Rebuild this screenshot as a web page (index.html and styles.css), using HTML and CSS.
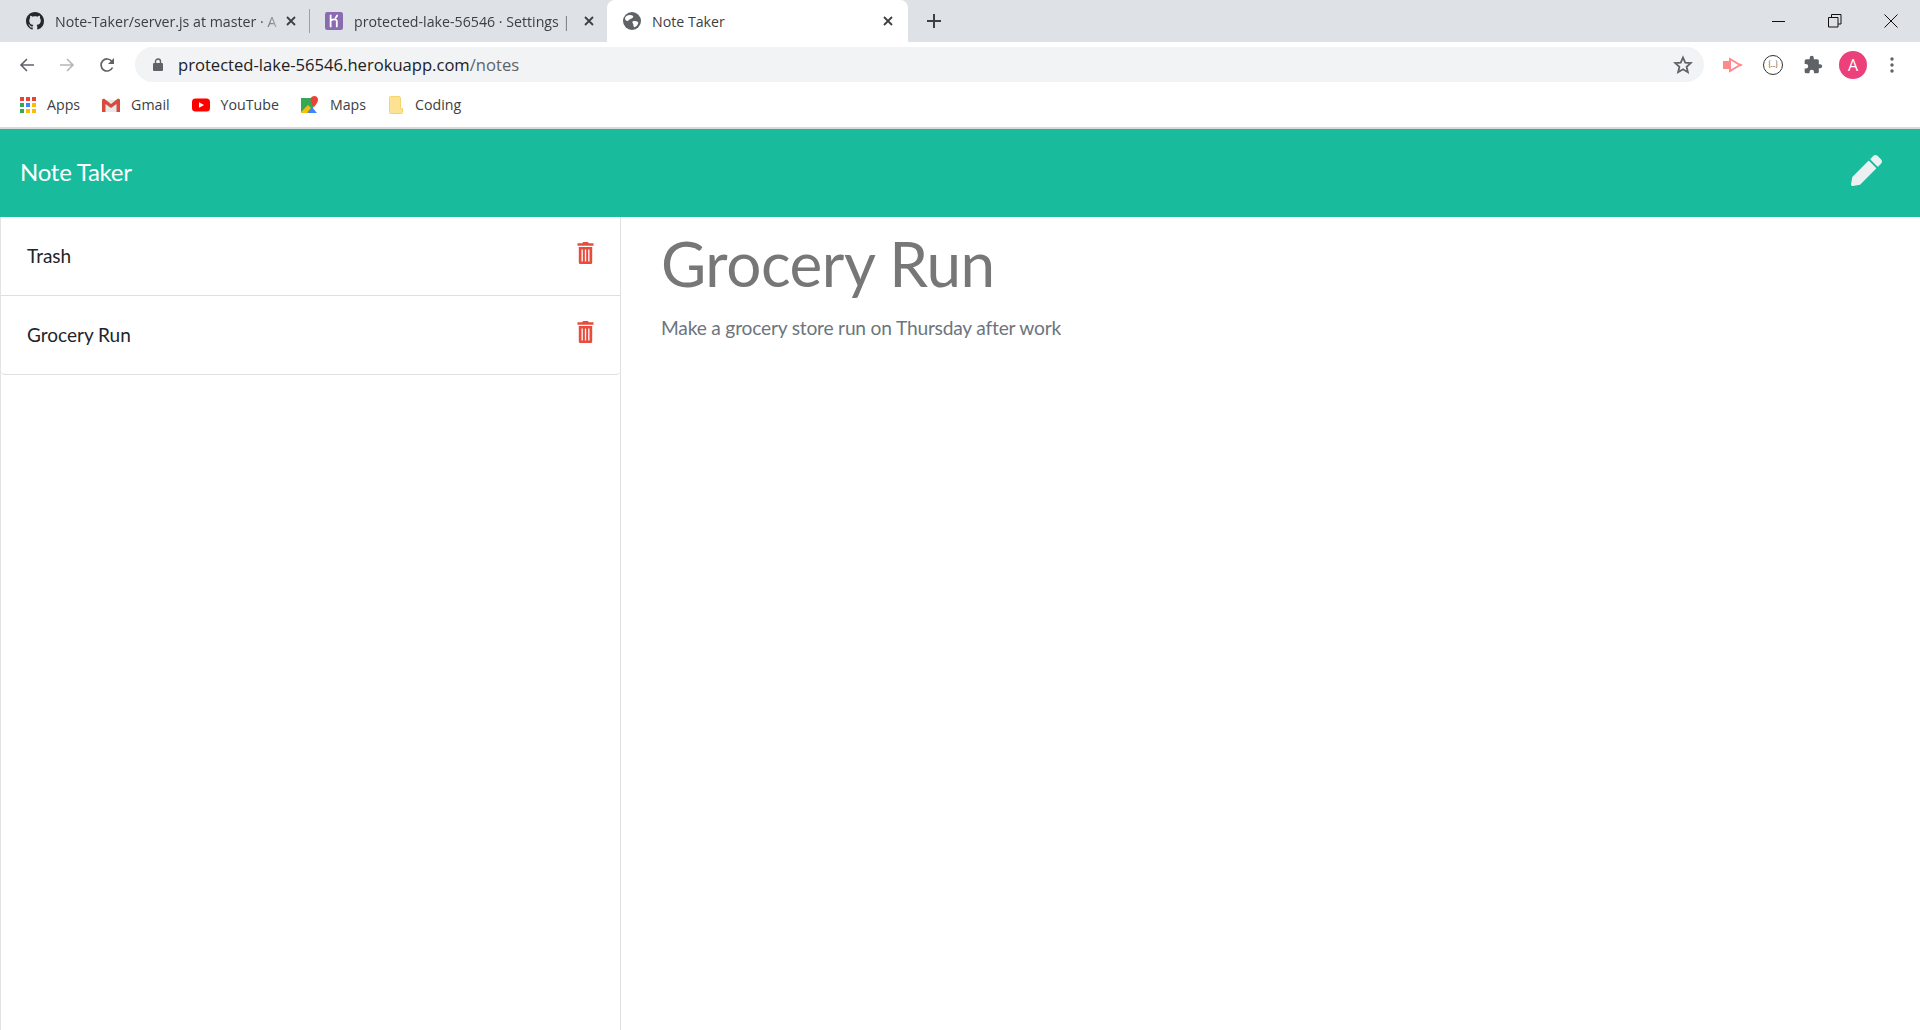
FILE: index.html
```html
<!DOCTYPE html>
<html lang="en">
<head>
    <meta charset="UTF-8">
    <meta name="viewport" content="width=device-width, initial-scale=1.0">
    <title>Note Taker</title>
    <link rel="stylesheet" href="styles.css">
</head>
<body>
    <div class="tab-strip">
        <div class="tab tab-one">
            <svg class="favicon" viewBox="0 0 16 16"><path fill="#24292e" d="M8 0C3.58 0 0 3.58 0 8c0 3.54 2.29 6.53 5.47 7.59.4.07.55-.17.55-.38 0-.19-.01-.82-.01-1.49-2.01.37-2.53-.49-2.69-.94-.09-.23-.48-.94-.82-1.13-.28-.15-.68-.52-.01-.53.63-.01 1.08.58 1.23.82.72 1.21 1.87.87 2.33.66.07-.52.28-.87.51-1.07-1.78-.2-3.64-.89-3.64-3.95 0-.87.31-1.59.82-2.15-.08-.2-.36-1.02.08-2.12 0 0 .67-.21 2.2.82.64-.18 1.32-.27 2-.27s1.36.09 2 .27c1.53-1.04 2.2-.82 2.2-.82.44 1.1.16 1.92.08 2.12.51.56.82 1.27.82 2.15 0 3.07-1.87 3.75-3.65 3.95.29.25.54.73.54 1.48 0 1.07-.01 1.93-.01 2.2 0 .21.15.46.55.38A8.01 8.01 0 0 0 16 8c0-4.42-3.58-8-8-8z"/></svg>
            <span class="tab-title tab-fade">Note-Taker/server.js at master · A</span>
            <svg class="tab-close" viewBox="0 0 10 10"><path d="M1 1l8 8M9 1l-8 8"/></svg>
        </div>
        <div class="tab-sep"></div>
        <div class="tab tab-two">
            <svg class="favicon" viewBox="0 0 16 16"><rect width="16" height="16" rx="2" fill="#8a6bb1"/><path fill="none" stroke="#fff" stroke-width="1.6" d="M5 2.5v11M5 7.5c2-1.2 5.5-1.8 5.5.8v5.2M11 2.5c0 1.2-.8 2-2 3"/></svg>
            <span class="tab-title tab-fade">protected-lake-56546 · Settings |</span>
            <svg class="tab-close" viewBox="0 0 10 10"><path d="M1 1l8 8M9 1l-8 8"/></svg>
        </div>
        <div class="tab tab-active">
            <svg class="favicon" viewBox="0 0 16 16"><circle cx="8" cy="8" r="8" fill="#5f6368"/><path fill="#fff" d="M3 3.5c2-1 4.500-1 6 0 .6 1-.8 2.400-2.500 2.700C5.200 6.500 5 8 3.800 8 2.800 8 1.800 7 1.800 6c0-1 .4-1.800 1.200-2.500zM8.500 8.500c1.500-.7 3.500-.5 5 .5.300 1.500-1.500 4-3.500 4.500-1-.5-.5-2-1-3-.4-.8-1-1.300-.5-2z"/></svg>
            <span class="tab-title">Note Taker</span>
            <svg class="tab-close" viewBox="0 0 10 10"><path d="M1 1l8 8M9 1l-8 8"/></svg>
        </div>
        <svg class="new-tab" viewBox="0 0 14 14"><path d="M7 0v14M0 7h14"/></svg>
        <div class="window-btns">
            <svg viewBox="0 0 14 14"><path d="M0 7.500h13"/></svg>
            <svg viewBox="0 0 14 14"><path d="M.5 3.500h9.500v9.500H.5zM3.500 3.500V.5h9.500v9.500h-3"/></svg>
            <svg viewBox="0 0 14 14"><path d="M.5.5l13 13M13.500.5l-13 13"/></svg>
        </div>
    </div>

    <div class="toolbar">
        <svg class="nav-icon" viewBox="0 0 16 16"><path fill="none" stroke="#5f6368" stroke-width="1.600" d="M15 8H2M8 2L2 8l6 6"/></svg>
        <svg class="nav-icon" viewBox="0 0 16 16"><path fill="none" stroke="#b4b6b9" stroke-width="1.600" d="M1 8h13M8 2l6 6-6 6"/></svg>
        <svg class="nav-icon" viewBox="0 0 16 16"><path fill="none" stroke="#5f6368" stroke-width="1.700" d="M13.500 10.500A6 6 0 1 1 12.800 4.300"/><path fill="#5f6368" d="M15 1v6H9z"/></svg>
        <div class="omnibox">
            <svg class="lock" viewBox="0 0 10 13"><path fill="#5f6368" d="M1 5h8a1 1 0 0 1 1 1v6a1 1 0 0 1-1 1H1a1 1 0 0 1-1-1V6a1 1 0 0 1 1-1z"/><path fill="none" stroke="#5f6368" stroke-width="1.400" d="M2.500 5.500V3.500a2.500 2.500 0 0 1 5 0v2"/></svg>
            <span class="url">protected-lake-56546.herokuapp.com<span class="url-path">/notes</span></span>
            <svg class="star" viewBox="0 0 24 24"><path fill="none" stroke="#5f6368" stroke-width="2.200" d="M12 3l2.700 6.100 6.600.6-5 4.400 1.500 6.500L12 17.200l-5.800 3.400 1.500-6.500-5-4.400 6.600-.6z"/></svg>
        </div>
        <div class="ext-icons">
            <svg class="ext" viewBox="0 0 20 20"><path fill="#ff8a8e" d="M0 6h6v8H0z"/><path fill="none" stroke="#ff8a8e" stroke-width="2" d="M7 4l10 6-10 6z"/><path fill="#ff8a8e" d="M17 8.500l3 1.500-3 1.500z"/><path fill="#fff" d="M5 5h1v1H5zM5 14h1v1H5z"/></svg>
            <div class="ext-ring">{...}</div>
            <svg class="ext" viewBox="0 0 24 24"><path fill="#5f6368" d="M20.500 11H19V7a2 2 0 0 0-2-2h-4V3.500a2.500 2.500 0 0 0-5 0V5H4a2 2 0 0 0-2 2v3.800h1.500a2.700 2.700 0 0 1 0 5.400H2V20a2 2 0 0 0 2 2h3.800v-1.500a2.700 2.700 0 0 1 5.400 0V22H17a2 2 0 0 0 2-2v-4h1.500a2.500 2.500 0 0 0 0-5z"/></svg>
            <div class="avatar">A</div>
            <svg class="kebab" viewBox="0 0 4 16"><circle cx="2" cy="2" r="1.700"/><circle cx="2" cy="8" r="1.700"/><circle cx="2" cy="14" r="1.700"/></svg>
        </div>
    </div>

    <div class="bookmarks">
        <div class="bookmark">
            <svg class="bm-icon" viewBox="0 0 16 16">
                <rect x="0" y="0" width="4" height="4" fill="#ea4335"/><rect x="6" y="0" width="4" height="4" fill="#ea4335"/><rect x="12" y="0" width="4" height="4" fill="#ea4335"/>
                <rect x="0" y="6" width="4" height="4" fill="#34a853"/><rect x="6" y="6" width="4" height="4" fill="#4285f4"/><rect x="12" y="6" width="4" height="4" fill="#fbbc05"/>
                <rect x="0" y="12" width="4" height="4" fill="#34a853"/><rect x="6" y="12" width="4" height="4" fill="#fbbc05"/><rect x="12" y="12" width="4" height="4" fill="#fbbc05"/>
            </svg>
            <span>Apps</span>
        </div>
        <div class="bookmark">
            <svg class="bm-icon bm-wide" viewBox="0 0 18 14"><path fill="#e8e8e8" d="M3 2h12v12H3z"/><path fill="#d54c3f" d="M0 1.500V14h3.500V6L9 10l5.500-4v8H18V1.500L16 .5 9 6 2 .5z"/></svg>
            <span>Gmail</span>
        </div>
        <div class="bookmark">
            <svg class="bm-icon bm-wide" viewBox="0 0 18 13"><rect width="18" height="13" rx="3.500" fill="#f00"/><path fill="#fff" d="M7 3.800L12 6.500 7 9.200z"/></svg>
            <span>YouTube</span>
        </div>
        <div class="bookmark">
            <svg class="bm-icon bm-wide" viewBox="0 0 18 18"><path fill="#34a853" d="M0 2h12v14L0 16z"/><path fill="#fbbc05" d="M0 16l7-7 3 3-4 5H0z"/><path fill="#4285f4" d="M6 17l5-6 5 6z"/><path fill="#ea4335" d="M13 0a4 4 0 0 1 4 4c0 3-4 6-4 8-.5-2-3.500-5-3.500-8A4 4 0 0 1 13 0z"/></svg>
            <span>Maps</span>
        </div>
        <div class="bookmark">
            <svg class="bm-folder" viewBox="0 0 14 18"><path fill="#fde293" stroke="#f5d46e" d="M.5 1.500a1 1 0 0 1 1-1h9l1 1v11h2v4a1 1 0 0 1-1 1h-11a1 1 0 0 1-1-1z"/></svg>
            <span>Coding</span>
        </div>
    </div>

    <nav class="navbar">
        <a class="navbar-brand">Note Taker</a>
        <svg class="pencil" viewBox="0 0 512 512"><path fill="#ecf0f1" d="M497.900 142.100l-46.100 46.100c-4.700 4.700-12.300 4.700-17 0l-111-111c-4.700-4.700-4.700-12.300 0-17l46.100-46.100c18.700-18.700 49.100-18.700 67.900 0l60.100 60.100c18.800 18.700 18.800 49.100 0 67.900zM284.200 99.800L21.600 362.400.4 483.900c-2.900 16.400 11.400 30.600 27.800 27.800l121.500-21.300 262.600-262.600c4.700-4.700 4.700-12.300 0-17l-111-111c-4.800-4.700-12.400-4.700-17.100 0z"/></svg>
    </nav>

    <div class="content">
        <aside class="sidebar">
            <ul class="list-group">
                <li class="list-item">
                    <span>Trash</span>
                    <svg class="trash" viewBox="0 0 16 22"><path fill-rule="evenodd" d="M5.500 0h5l.7 1.200H16v2.600H0V1.200h4.800zM1.300 5h13.400v15.500a1.500 1.500 0 0 1-1.500 1.500H2.800a1.500 1.500 0 0 1-1.500-1.500zM4 7.500v12h1.300v-12zM7.350 7.500v12h1.300v-12zM10.700 7.500v12H12v-12z"/></svg>
                </li>
                <li class="list-item">
                    <span>Grocery Run</span>
                    <svg class="trash" viewBox="0 0 16 22"><path fill-rule="evenodd" d="M5.500 0h5l.7 1.200H16v2.600H0V1.200h4.800zM1.300 5h13.400v15.500a1.500 1.500 0 0 1-1.500 1.500H2.800a1.500 1.500 0 0 1-1.500-1.500zM4 7.500v12h1.300v-12zM7.350 7.500v12h1.300v-12zM10.700 7.500v12H12v-12z"/></svg>
                </li>
            </ul>
        </aside>
        <main class="note">
            <h1 class="note-title">Grocery Run</h1>
            <p class="note-text">Make a grocery store run on Thursday after work</p>
        </main>
    </div>
</body>
</html>
```

FILE: styles.css
```css
* {
    box-sizing: border-box;
}
html, body {
    height: 100%;
}
body {
    margin: 0;
    font-family: Lato, sans-serif;
    background-color: #fff;
    overflow: hidden;
    display: flex;
    flex-direction: column;
}
svg {
    flex-shrink: 0;
    display: block;
}

/* browser chrome */
.tab-strip {
    height: 42px;
    background-color: #dee1e6;
    display: flex;
    align-items: center;
    font-family: "Open Sans", sans-serif;
    font-size: 14.200px;
    color: #3c4043;
}
.tab {
    display: flex;
    align-items: center;
    height: 42px;
}
.tab-one {
    width: 309px;
    padding: 0 13px 0 26px;
}
.tab-two {
    width: 297px;
    padding: 0 13px 0 15px;
}
.tab-active {
    width: 301px;
    padding: 0 15px 0 16px;
    background-color: #fff;
    border-radius: 8px 8px 0 0;
    color: #3c4043;
}
.tab-sep {
    width: 1px;
    height: 24px;
    background-color: #9aa0a6;
}
.favicon {
    width: 18px;
    height: 18px;
}
.tab-title {
    flex: 1;
    margin-left: 11px;
    white-space: nowrap;
    overflow: hidden;
}
.tab-fade {
    -webkit-mask-image: linear-gradient(to right, #000 88%, transparent 100%);
    mask-image: linear-gradient(to right, #000 88%, transparent 100%);
}
.tab-close {
    width: 10px;
    height: 10px;
    fill: none;
    stroke: #3c4043;
    stroke-width: 1.800;
}
.new-tab {
    width: 14px;
    height: 14px;
    margin-left: 19px;
    fill: none;
    stroke: #3c4043;
    stroke-width: 2;
}
.window-btns {
    margin-left: auto;
    display: flex;
    gap: 42px;
    padding-right: 22px;
}
.window-btns svg {
    width: 14px;
    height: 14px;
    fill: none;
    stroke: #111;
    stroke-width: 1;
}
.toolbar {
    height: 47px;
    padding: 5px 0 7px 19px;
    display: flex;
    align-items: center;
    gap: 24px;
}
.nav-icon {
    width: 16px;
    height: 16px;
}
.omnibox {
    width: 1569px;
    height: 35px;
    margin-left: -4px;
    padding: 0 11px 0 18px;
    background-color: #f1f3f4;
    border-radius: 18px;
    display: flex;
    align-items: center;
}
.lock {
    width: 10px;
    height: 13px;
}
.url {
    flex: 1;
    margin-left: 15px;
    font-family: "Open Sans", sans-serif;
    font-size: 16.600px;
    color: #202124;
}
.url-path {
    color: #5f6368;
}
.star {
    width: 20px;
    height: 20px;
}
.ext-icons {
    display: flex;
    align-items: center;
    margin-left: -5px;
    gap: 20px;
}
.ext {
    width: 20px;
    height: 20px;
}
.ext-ring {
    width: 20px;
    height: 20px;
    border: 1.500px solid #333;
    border-radius: 50%;
    font-size: 7px;
    line-height: 16px;
    text-align: center;
    color: #444;
}
.avatar {
    width: 28px;
    height: 28px;
    margin: 0 -3px 0 -4px;
    border-radius: 50%;
    background-color: #ec407a;
    color: #fff;
    font-family: "Open Sans", sans-serif;
    font-size: 16px;
    line-height: 28px;
    text-align: center;
}
.kebab {
    width: 4px;
    height: 16px;
    margin-left: 6px;
    fill: #5f6368;
}
.bookmarks {
    height: 38px;
    padding: 0 0 7px 20px;
    display: flex;
    align-items: center;
    gap: 22px;
    font-family: "Open Sans", sans-serif;
    font-size: 14.200px;
    color: #3c4043;
}
.bookmark {
    display: flex;
    align-items: center;
    gap: 11px;
}
.bm-icon {
    width: 16px;
    height: 16px;
}
.bm-wide {
    width: 18px;
    height: 18px;
}
.bm-folder {
    width: 16px;
    height: 18px;
}

/* app */
.navbar {
    height: 90px;
    border-top: 2px solid #d9d9d9;
    background-color: #18bc9c;
    background-clip: padding-box;
    display: flex;
    align-items: center;
    justify-content: space-between;
    padding: 0 38px 3px 20px;
}
.navbar-brand {
    font-size: 24px;
    letter-spacing: -0.25px;
    color: #fff;
}
.pencil {
    width: 31px;
    height: 31px;
    margin-top: -3px;
}
.content {
    flex: 1;
    display: flex;
    min-height: 0;
}
.sidebar {
    width: 621px;
    border-left: 1px solid #e3e3e3;
    border-right: 1px solid #e0e0e0;
}
.list-group {
    list-style: none;
    margin: 0;
    padding: 0;
}
.list-item {
    height: 79px;
    padding: 0 25px 2px 26px;
    border-bottom: 1px solid #dfdfdf;
    display: flex;
    align-items: center;
    justify-content: space-between;
    font-size: 19px;
    color: #212529;
}
.list-item:last-child {
    border-radius: 0 0 4px 4px;
}
.trash {
    width: 19px;
    height: 22px;
    margin-top: -4px;
    fill: #e74c3c;
}
.note {
    flex: 1;
    padding: 0 40px;
}
.note-title {
    margin: 8px 0 0;
    font-size: 62px;
    font-weight: 400;
    letter-spacing: -0.45px;
    line-height: 77px;
    color: #777;
}
.note-text {
    margin: 14px 0 0;
    font-size: 19.200px;
    letter-spacing: -0.2px;
    color: #6c757d;
}
```
